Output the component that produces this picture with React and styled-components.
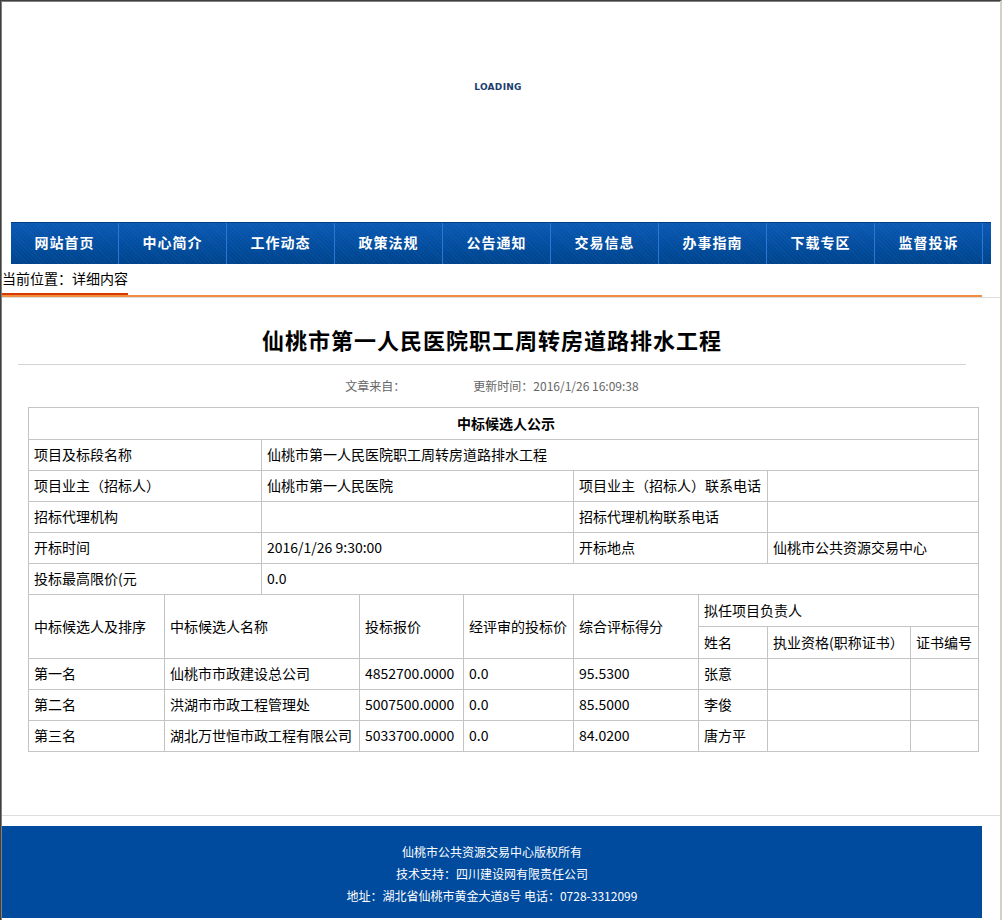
import styled, { createGlobalStyle } from 'styled-components';

const GlobalStyle = createGlobalStyle`
  html, body {
    margin: 0;
    padding: 0;
    background: #ffffff;
  }
  body {
    font-family: 'Noto Sans CJK SC', 'Liberation Sans', sans-serif;
    color: #000;
  }
`;

const NAV_ITEMS = ['网站首页', '中心简介', '工作动态', '政策法规', '公告通知', '交易信息', '办事指南', '下载专区', '监督投诉'];

const CANDIDATES = [
  { rank: '第一名', name: '仙桃市市政建设总公司', price: '4852700.0000', reviewed: '0.0', score: '95.5300', leader: '张意' },
  { rank: '第二名', name: '洪湖市市政工程管理处', price: '5007500.0000', reviewed: '0.0', score: '85.5000', leader: '李俊' },
  { rank: '第三名', name: '湖北万世恒市政工程有限公司', price: '5033700.0000', reviewed: '0.0', score: '84.0200', leader: '唐方平' },
];

// 表格列宽 (合计 950)
const COLS = [136, 97, 98, 104, 110, 125, 69, 143, 68];

const App = () => {
  return (
    <>
      <GlobalStyle />
      <StFrame>
        <StBanner>
          <StLoading>LOADING</StLoading>
        </StBanner>
        <StNav>
          {NAV_ITEMS.map((item) => (
            <StNavItem key={item}>{item}</StNavItem>
          ))}
        </StNav>
        <StCrumbBar>
          <StCrumb>当前位置：详细内容</StCrumb>
        </StCrumbBar>

        <StContent>
          <StTitle>仙桃市第一人民医院职工周转房道路排水工程</StTitle>
          <StMeta>
            <span>文章来自：</span>
            <StMetaTime>更新时间：2016/1/26 16:09:38</StMetaTime>
          </StMeta>

          <StTable>
            <colgroup>
              {COLS.map((w, i) => (
                <col key={i} style={{ width: w }} />
              ))}
            </colgroup>
            <tbody>
              <tr>
                <StCell colSpan={9} $bold $center $tall>
                  中标候选人公示
                </StCell>
              </tr>
              <tr>
                <StCell colSpan={2}>项目及标段名称</StCell>
                <StCell colSpan={7}>仙桃市第一人民医院职工周转房道路排水工程</StCell>
              </tr>
              <tr>
                <StCell colSpan={2}>项目业主（招标人）</StCell>
                <StCell colSpan={3}>仙桃市第一人民医院</StCell>
                <StCell colSpan={2}>项目业主（招标人）联系电话</StCell>
                <StCell colSpan={2}></StCell>
              </tr>
              <tr>
                <StCell colSpan={2}>招标代理机构</StCell>
                <StCell colSpan={3}></StCell>
                <StCell colSpan={2}>招标代理机构联系电话</StCell>
                <StCell colSpan={2}></StCell>
              </tr>
              <tr>
                <StCell colSpan={2}>开标时间</StCell>
                <StCell colSpan={3}>2016/1/26 9:30:00</StCell>
                <StCell colSpan={2}>开标地点</StCell>
                <StCell colSpan={2}>仙桃市公共资源交易中心</StCell>
              </tr>
              <tr>
                <StCell colSpan={2}>投标最高限价(元</StCell>
                <StCell colSpan={7}>0.0</StCell>
              </tr>
              <tr>
                <StCell rowSpan={2}>中标候选人及排序</StCell>
                <StCell rowSpan={2} colSpan={2}>中标候选人名称</StCell>
                <StCell rowSpan={2}>投标报价</StCell>
                <StCell rowSpan={2}>经评审的投标价</StCell>
                <StCell rowSpan={2}>综合评标得分</StCell>
                <StCell colSpan={3} $tall>拟任项目负责人</StCell>
              </tr>
              <tr>
                <StCell $tall>姓名</StCell>
                <StCell $tall>执业资格(职称证书）</StCell>
                <StCell $tall>证书编号</StCell>
              </tr>
              {CANDIDATES.map((c) => (
                <tr key={c.rank}>
                  <StCell>{c.rank}</StCell>
                  <StCell colSpan={2}>{c.name}</StCell>
                  <StCell>{c.price}</StCell>
                  <StCell>{c.reviewed}</StCell>
                  <StCell>{c.score}</StCell>
                  <StCell>{c.leader}</StCell>
                  <StCell></StCell>
                  <StCell></StCell>
                </tr>
              ))}
            </tbody>
          </StTable>
        </StContent>

        <StFooter>
          <div>仙桃市公共资源交易中心版权所有</div>
          <div>技术支持：四川建设网有限责任公司</div>
          <div>地址：湖北省仙桃市黄金大道8号 电话：0728-3312099</div>
        </StFooter>
      </StFrame>
    </>
  );
};

export default App;

const StFrame = styled.div`
  width: 1002px;
  height: 920px;
  box-sizing: border-box;
  overflow: hidden;
  border-top: 1px solid #404040;
  border-left: 1px solid #404040;
  border-right: 2px solid #d4d0c8;
  box-shadow: inset 1px 1px 0 #808080;
  padding-top: 1px;
  padding-left: 1px;
`;

const StBanner = styled.div`
  width: 980px;
  height: 220px;
  margin-left: 9px;
  display: flex;
  justify-content: center;
  padding-top: 79px;
  box-sizing: border-box;
`;

const StLoading = styled.div`
  font-family: 'DejaVu Sans', 'Liberation Sans', sans-serif;
  font-weight: bold;
  font-size: 9px;
  line-height: 12px;
  color: #1b3d6f;
  letter-spacing: 0.3px;
  margin-left: -6px;
`;

const StNav = styled.div`
  width: 980px;
  height: 42px;
  margin-left: 9px;
  box-sizing: border-box;
  display: flex;
  border-top: 1px solid #003d85;
  background-color: #024d9f;
  background-image:
    repeating-linear-gradient(45deg, rgba(255, 255, 255, 0.03) 0 1px, transparent 1px 3px),
    linear-gradient(#0a59b4, #004a99 70%, #00448c);
`;

const StNavItem = styled.div`
  width: 107px;
  flex: none;
  border-right: 1px solid #2b77d6;
  display: flex;
  align-items: center;
  justify-content: center;
  padding-bottom: 3px;
  color: #ffffff;
  font-weight: bold;
  font-size: 14px;
  letter-spacing: 1px;
`;

const StCrumbBar = styled.div`
  width: 980px;
  height: 33px;
  box-sizing: border-box;
  border-bottom: 2px solid #f38d3f;
  display: flex;
  align-items: flex-end;
`;

const StCrumb = styled.span`
  font-size: 14px;
  line-height: 28px;
  padding-bottom: 1px;
  color: #000;
  border-bottom: 2px solid #d63a00;
`;

const StContent = styled.div`
  border-top: 1px solid #dddddd;
  border-bottom: 1px solid #dddddd;
  height: 519px;
  box-sizing: border-box;
  padding-top: 21px;
`;

const StTitle = styled.h1`
  width: 948px;
  margin: 0 0 0 16px;
  padding-bottom: 5px;
  border-bottom: 1px solid #d4d4d4;
  font-size: 22px;
  line-height: 40px;
  font-weight: bold;
  letter-spacing: 1px;
  text-align: center;
  color: #000;
`;

const StMeta = styled.div`
  width: 948px;
  margin: 11px 0 0 16px;
  font-size: 12px;
  line-height: 20px;
  color: #666666;
  text-align: center;
`;

const StMetaTime = styled.span`
  margin-left: 68px;
`;

const StTable = styled.table`
  width: 950px;
  margin: 11px 0 0 26px;
  border-collapse: collapse;
  table-layout: fixed;
`;

const StCell = styled.td`
  border: 1px solid #c4c4c4;
  height: ${(p) => (p.$tall ? '32px' : '31px')};
  padding: 0 0 2px 5px;
  box-sizing: border-box;
  font-size: 14px;
  line-height: 18px;
  font-weight: ${(p) => (p.$bold ? 'bold' : 'normal')};
  text-align: ${(p) => (p.$center ? 'center' : 'left')};
  white-space: nowrap;
  overflow: hidden;
  color: #000;
`;

const StFooter = styled.div`
  width: 980px;
  margin-top: 10px;
  background: #004b9d;
  color: #ffffff;
  font-size: 12px;
  line-height: 22px;
  text-align: center;
  padding: 15px 0 11px;
`;
